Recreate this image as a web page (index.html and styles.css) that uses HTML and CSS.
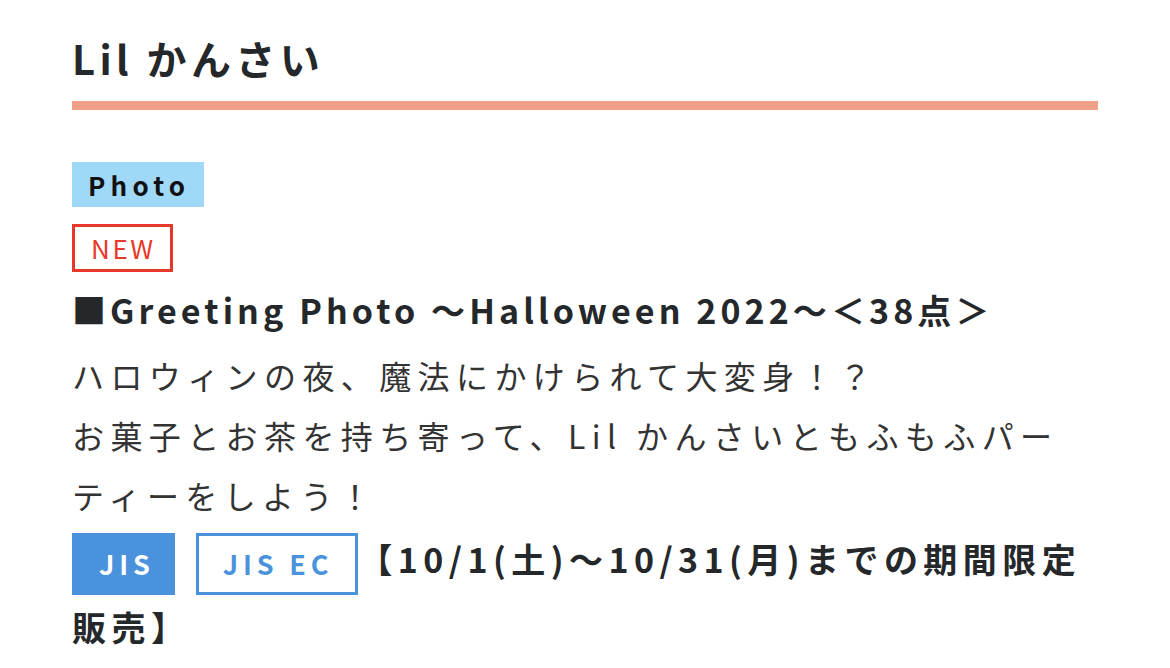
FILE: index.html
```html
<!DOCTYPE html>
<html lang="ja">
<head>
  <meta charset="UTF-8">
  <meta name="viewport" content="width=device-width, initial-scale=1.0">
  <title>Lil かんさい</title>
  <link rel="stylesheet" href="styles.css">
</head>
<body>
  <div class="wrap">
    <h2 class="title">Lil かんさい</h2>

    <div class="item">
      <div class="tags">
        <span class="cat">Photo</span>
        <span class="new">NEW</span>
      </div>
      <p class="head">■Greeting Photo 〜Halloween 2022〜＜38点＞</p>
      <p class="desc">ハロウィンの夜、魔法にかけられて大変身！？<br>お菓子とお茶を持ち寄って、Lil かんさいともふもふパーティーをしよう！</p>
      <p class="shop"><span class="badge jis">JIS</span><span class="badge jisec">JIS EC</span>【10/1(土)〜10/31(月)までの期間限定販売】</p>
    </div>
  </div>
</body>
</html>
```

FILE: styles.css
```css
body {
  font-family: "Noto Sans CJK JP", "Noto Sans", sans-serif;
  background: #fff;
  color: #333;
  margin: 0;
}
.wrap {
  padding: 0 72px;
}
.title {
  margin: 0;
  padding: 30px 0 15px;
  font-size: 40px;
  line-height: 56px;
  letter-spacing: 0.11em;
  color: #25282b;
  border-bottom: 9px solid #f0a088;
}
.item {
  padding-top: 52px;
}
.tags {
  display: flex;
  flex-direction: column;
  align-items: flex-start;
  gap: 17px;
}
.cat {
  background: #a0d8f8;
  color: #111;
  font-weight: bold;
  font-size: 26px;
  line-height: 45px;
  letter-spacing: 0.2em;
  padding: 0 14px 0 16px;
}
.new {
  border: 3px solid #e8382b;
  color: #e8382b;
  font-size: 26px;
  line-height: 42px;
  letter-spacing: 0.1em;
  padding: 0 14px 0 16px;
}
.head {
  margin: 6px 0 0;
  font-size: 34px;
  line-height: 64px;
  font-weight: bold;
  letter-spacing: 0.12em;
  color: #25282b;
}
.desc {
  margin: 3px 0 0;
  padding-right: 30px;
  font-size: 32px;
  line-height: 60px;
  letter-spacing: 0.2em;
}
.shop {
  margin: 2px 0 0;
  font-size: 34px;
  font-weight: bold;
  line-height: 64px;
  letter-spacing: 0.16em;
  color: #25282b;
}
.badge {
  display: inline-block;
  vertical-align: middle;
  box-sizing: border-box;
  height: 62px;
  line-height: 56px;
  font-size: 27px;
  letter-spacing: 0.18em;
  padding: 0 22px 0 24px;
  margin-right: 21px;
  border: 3px solid #4a93dc;
}
.jis {
  background: #4a93dc;
  color: #fff;
  padding-right: 17px;
}
.jisec {
  color: #4a93dc;
  background: #fff;
  margin-right: 0;
}
```
